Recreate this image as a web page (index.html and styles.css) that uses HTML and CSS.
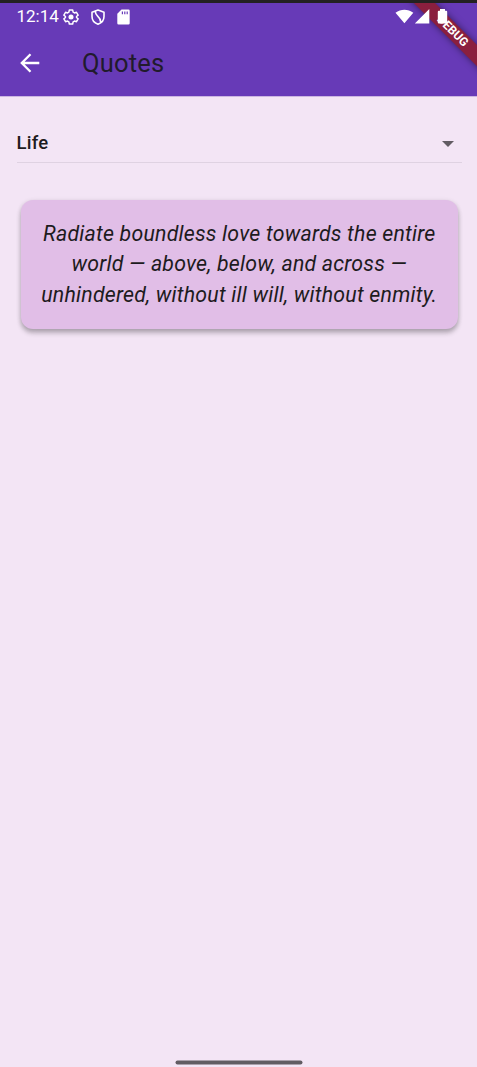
FILE: index.html
```html
<!DOCTYPE html>
<html lang="en">
<head>
<meta charset="utf-8">
<title>Quotes</title>
<link rel="stylesheet" href="styles.css">
</head>
<body>
<div class="screen">
  <header class="header">
    <div class="status">
      <span class="clock">12:14</span>
      <svg class="gear" viewBox="0 0 24 24"><path fill="none" stroke="currentColor" stroke-width="2.200" stroke-linejoin="round" d="M9.500 1.500h5l.7 3.200 2 1.200 3-1 2.500 4.300-2.400 2v1.600l2.400 2-2.500 4.300-3-1-2 1.200-.7 3.200h-5l-.7-3.200-2-1.200-3 1L1.300 14.800l2.400-2v-1.600l-2.400-2L3.800 4.900l3 1 2-1.200z"/><circle cx="12" cy="12" r="3.800" fill="currentColor"/></svg>
      <svg class="shield" viewBox="0 0 14 16"><path fill="none" stroke="currentColor" stroke-width="1.600" stroke-linejoin="round" d="M7 1 13 3.200V7.500C13 11 10.500 14 7 15.200 3.500 14 1 11 1 7.500V3.200zM4.500 2.200C3.300 7.500 10.800 7.500 9.400 13.700"/></svg>
      <svg class="sd" viewBox="0 0 13 16"><path fill="currentColor" fill-rule="evenodd" d="M4.500.5H11.500Q12.700.5 12.700 1.700V14.300Q12.700 15.500 11.500 15.500H1.500Q.3 15.500.3 14.300V4.700zM4.800 2.500V5.200H6V2.500zM7.200 2.500V5.200H8.400V2.500zM9.600 2.500V5.200H10.800V2.500z"/></svg>
      <svg class="radio" viewBox="0 0 54 18"><path fill="currentColor" d="M.5 4.800C5.800.6 13 .6 18.300 4.800L9.400 15.300zM34.300 1V15.500H19.800zM45 1h5v1.800h1.200q1 0 1 1V14.500q0 1-1 1h-7.400q-1 0-1-1V3.800q0-1 1-1H45z"/></svg>
    </div>
    <div class="toolbar">
      <svg class="back" viewBox="0 0 20 20"><path fill="none" stroke="currentColor" stroke-width="2.300" d="M19.300 10H2.500M10.500 1.300 1.800 10l8.700 8.700"/></svg>
      <h1 class="title">Quotes</h1>
    </div>
    <div class="debug">DEBUG</div>
  </header>
  <main class="content">
    <div class="dropdown"><span class="selected">Life</span><svg class="caret" viewBox="0 0 12 6"><path fill="currentColor" d="M0 0h12L6 6z"/></svg></div>
    <section class="card">
      <p class="quote">Radiate boundless love towards the entire<br>world — above, below, and across —<br>unhindered, without ill will, without enmity.</p>
    </section>
  </main>
  <div class="home"></div>
</div>
</body>
</html>
```
FILE: styles.css
```css
* { box-sizing: border-box; }
body { margin: 0; font-family: Roboto, sans-serif; color: #1d1b20; }
.screen { display: flex; flex-direction: column; width: 477px; height: 1067px; background: #f3e5f5; border-top: 3px solid #232121; overflow: hidden; }
.header { position: relative; height: 93px; background: #673ab7; box-shadow: 0 1px 0 #cbb6e1; color: #fff; overflow: hidden; flex: none; }
.status { display: flex; align-items: center; height: 27.500px; padding: 0 28px 0 16.500px; }
.clock { width: 46.500px; font-size: 17px; line-height: 27px; letter-spacing: 0; white-space: nowrap; }
.gear { width: 16px; height: 16px; }
.shield { width: 14px; height: 16px; margin-left: 11.500px; }
.sd { width: 13px; height: 16px; margin-left: 12px; }
.radio { position: relative; z-index: 2; width: 54px; height: 18px; margin-left: auto; }
.toolbar { display: flex; align-items: center; height: 65px; padding: 0 0 0 20px; }
.back { width: 20px; height: 20px; }
.title { margin: -1px 0 0 42px; font-size: 25.500px; line-height: 34px; font-weight: 400; letter-spacing: .2px; color: #211b2c; }
.debug { position: absolute; left: 399.200px; top: 21.800px; width: 110px; height: 14.500px; background: #8a1f3e; box-shadow: 0 0 7px rgba(0,0,0,.5); transform: rotate(45deg); font-size: 12px; font-weight: 700; line-height: 14.500px; padding-right: 3.500px; text-align: center; }
.content { flex: 1; padding: 27.500px 15.500px 0 16.500px; }
.dropdown { display: flex; align-items: center; justify-content: space-between; height: 39.500px; padding-right: 8px; border-bottom: 1px solid #dfd2e2; }
.selected { font-size: 18.500px; font-weight: 500; letter-spacing: .25px; line-height: 26px; }
.caret { width: 12px; height: 6px; margin-top: 3px; color: #625c63; }
.card { margin: 37px 4px 0 4.500px; height: 129px; padding-top: 18.500px; border-radius: 12px; background: #e1bee7; box-shadow: 0 4px 5px rgba(0,0,0,.24), 0 1px 5px rgba(0,0,0,.12); }
.quote { margin: 0; text-align: center; font-size: 21.300px; line-height: 30.500px; font-style: italic; font-weight: 400; letter-spacing: .22px; white-space: nowrap; }
.home { width: 127px; height: 4px; margin: 0 auto 3px; transform: translate(.5px, .5px); border-radius: 3px; background: #625c63; flex: none; }
```
